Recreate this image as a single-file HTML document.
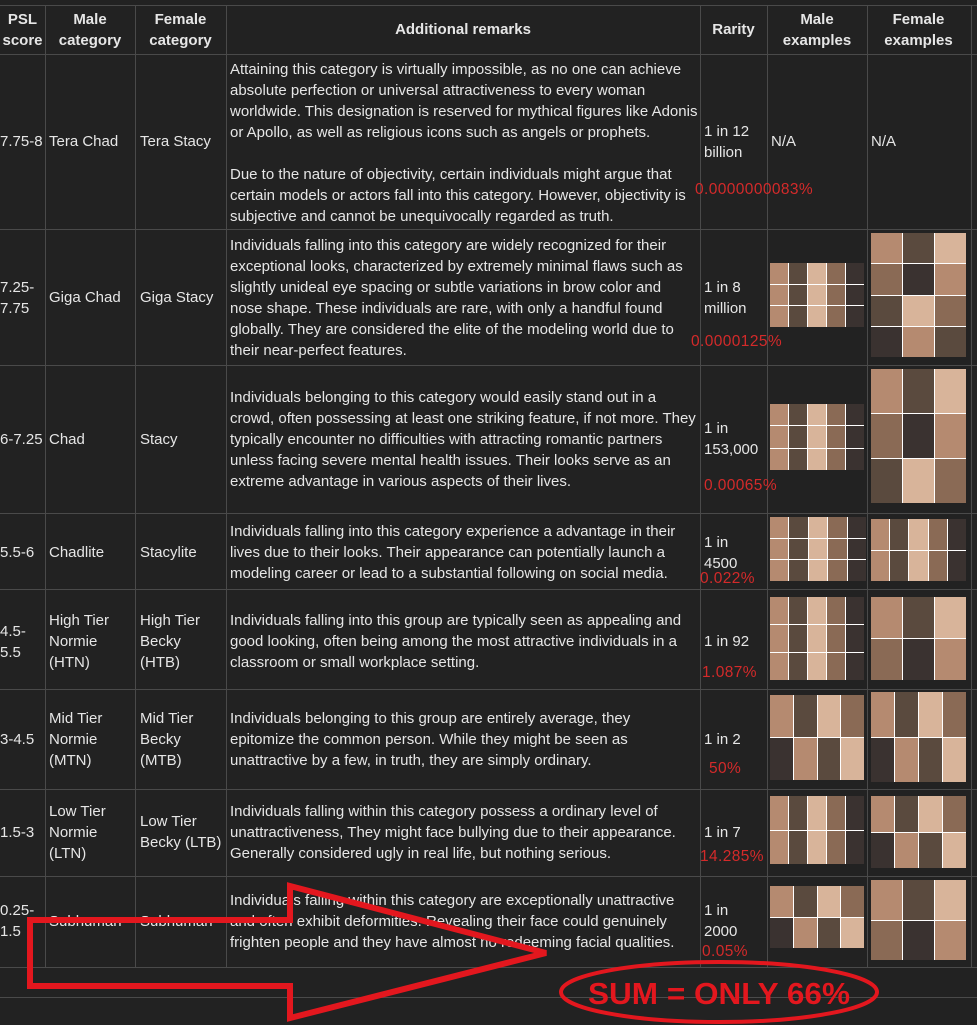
<!DOCTYPE html>
<html><head><meta charset="utf-8"><style>
body{margin:0;width:977px;height:1025px;background:#222;overflow:hidden;position:relative;font-family:"Liberation Sans",Arial,sans-serif;color:#e6e6e6;font-size:15px}
.h{position:absolute;left:0;width:977px;height:1px;background:#4a4a4a}
.v{position:absolute;top:5px;width:1px;height:962px;background:#4a4a4a}
.t{position:absolute;line-height:21px;white-space:nowrap}
.b{font-weight:bold;text-align:center}
.r{color:#d42a2a;font-size:15.5px;letter-spacing:0.4px}
.img{position:absolute;display:grid;background:#fff;gap:1px}
.img div:nth-child(5n+1){background:#b58a70}
.img div:nth-child(5n+2){background:#5a4a3e}
.img div:nth-child(5n+3){background:#d8b49a}
.img div:nth-child(5n+4){background:#8a6a55}
.img div:nth-child(5n){background:#3a3230}
</style></head><body>
<div class="h" style="top:5px"></div>
<div class="h" style="top:54px"></div>
<div class="h" style="top:229px"></div>
<div class="h" style="top:365px"></div>
<div class="h" style="top:513px"></div>
<div class="h" style="top:589px"></div>
<div class="h" style="top:689px"></div>
<div class="h" style="top:789px"></div>
<div class="h" style="top:876px"></div>
<div class="h" style="top:967px"></div>
<div class="h" style="top:997px"></div>
<div class="v" style="left:45px"></div>
<div class="v" style="left:135px"></div>
<div class="v" style="left:226px"></div>
<div class="v" style="left:700px"></div>
<div class="v" style="left:767px"></div>
<div class="v" style="left:867px"></div>
<div class="v" style="left:971px"></div>

<div class="t b" style="left:0;width:45px;top:9px">PSL<br>score</div>
<div class="t b" style="left:45px;width:90px;top:9px">Male<br>category</div>
<div class="t b" style="left:135px;width:91px;top:9px">Female<br>category</div>
<div class="t b" style="left:226px;width:474px;top:19px">Additional remarks</div>
<div class="t b" style="left:700px;width:67px;top:19px">Rarity</div>
<div class="t b" style="left:767px;width:100px;top:9px">Male<br>examples</div>
<div class="t b" style="left:867px;width:103px;top:9px">Female<br>examples</div>

<div class="t" style="left:0;top:131px">7.75-8</div>
<div class="t" style="left:49px;top:131px">Tera Chad</div>
<div class="t" style="left:140px;top:131px">Tera Stacy</div>
<div class="t" style="left:230px;top:59px">Attaining this category is virtually impossible, as no one can achieve<br>absolute perfection or universal attractiveness to every woman<br>worldwide. This designation is reserved for mythical figures like Adonis<br>or Apollo, as well as religious icons such as angels or prophets.<br><br>Due to the nature of objectivity, certain individuals might argue that<br>certain models or actors fall into this category. However, objectivity is<br>subjective and cannot be unequivocally regarded as truth.</div>
<div class="t" style="left:704px;top:121px">1 in 12<br>billion</div>
<div class="t r" style="left:695px;top:179px">0.0000000083%</div>
<div class="t" style="left:771px;top:131px">N/A</div>
<div class="t" style="left:871px;top:131px">N/A</div>

<div class="t" style="left:0;top:277px">7.25-<br>7.75</div>
<div class="t" style="left:49px;top:287px">Giga Chad</div>
<div class="t" style="left:140px;top:287px">Giga Stacy</div>
<div class="t" style="left:230px;top:235px">Individuals falling into this category are widely recognized for their<br>exceptional looks, characterized by extremely minimal flaws such as<br>slightly unideal eye spacing or subtle variations in brow color and<br>nose shape. These individuals are rare, with only a handful found<br>globally. They are considered the elite of the modeling world due to<br>their near-perfect features.</div>
<div class="t" style="left:704px;top:277px">1 in 8<br>million</div>
<div class="t r" style="left:691px;top:331px">0.0000125%</div>
<div class="img" style="left:770px;top:263px;width:94px;height:64px;grid-template-columns:repeat(5,1fr);grid-template-rows:repeat(3,1fr)"><div></div><div></div><div></div><div></div><div></div><div></div><div></div><div></div><div></div><div></div><div></div><div></div><div></div><div></div><div></div></div>
<div class="img" style="left:871px;top:233px;width:95px;height:124px;grid-template-columns:repeat(3,1fr);grid-template-rows:repeat(4,1fr)"><div></div><div></div><div></div><div></div><div></div><div></div><div></div><div></div><div></div><div></div><div></div><div></div></div>

<div class="t" style="left:0;top:429px">6-7.25</div>
<div class="t" style="left:49px;top:429px">Chad</div>
<div class="t" style="left:140px;top:429px">Stacy</div>
<div class="t" style="left:230px;top:387px">Individuals belonging to this category would easily stand out in a<br>crowd, often possessing at least one striking feature, if not more. They<br>typically encounter no difficulties with attracting romantic partners<br>unless facing severe mental health issues. Their looks serve as an<br>extreme advantage in various aspects of their lives.</div>
<div class="t" style="left:704px;top:418px">1 in<br>153,000</div>
<div class="t r" style="left:704px;top:475px">0.00065%</div>
<div class="img" style="left:770px;top:404px;width:94px;height:66px;grid-template-columns:repeat(5,1fr);grid-template-rows:repeat(3,1fr)"><div></div><div></div><div></div><div></div><div></div><div></div><div></div><div></div><div></div><div></div><div></div><div></div><div></div><div></div><div></div></div>
<div class="img" style="left:871px;top:369px;width:95px;height:134px;grid-template-columns:repeat(3,1fr);grid-template-rows:repeat(3,1fr)"><div></div><div></div><div></div><div></div><div></div><div></div><div></div><div></div><div></div></div>

<div class="t" style="left:0;top:542px">5.5-6</div>
<div class="t" style="left:49px;top:542px">Chadlite</div>
<div class="t" style="left:140px;top:542px">Stacylite</div>
<div class="t" style="left:230px;top:521px">Individuals falling into this category experience a advantage in their<br>lives due to their looks. Their appearance can potentially launch a<br>modeling career or lead to a substantial following on social media.</div>
<div class="t" style="left:704px;top:532px">1 in<br>4500</div>
<div class="t r" style="left:700px;top:568px">0.022%</div>
<div class="img" style="left:770px;top:517px;width:96px;height:64px;grid-template-columns:repeat(5,1fr);grid-template-rows:repeat(3,1fr)"><div></div><div></div><div></div><div></div><div></div><div></div><div></div><div></div><div></div><div></div><div></div><div></div><div></div><div></div><div></div></div>
<div class="img" style="left:871px;top:519px;width:95px;height:62px;grid-template-columns:repeat(5,1fr);grid-template-rows:repeat(2,1fr)"><div></div><div></div><div></div><div></div><div></div><div></div><div></div><div></div><div></div><div></div></div>

<div class="t" style="left:0;top:621px">4.5-<br>5.5</div>
<div class="t" style="left:49px;top:610px">High Tier<br>Normie<br>(HTN)</div>
<div class="t" style="left:140px;top:610px">High Tier<br>Becky<br>(HTB)</div>
<div class="t" style="left:230px;top:610px">Individuals falling into this group are typically seen as appealing and<br>good looking, often being among the most attractive individuals in a<br>classroom or small workplace setting.</div>
<div class="t" style="left:704px;top:631px">1 in 92</div>
<div class="t r" style="left:702px;top:662px">1.087%</div>
<div class="img" style="left:770px;top:597px;width:94px;height:83px;grid-template-columns:repeat(5,1fr);grid-template-rows:repeat(3,1fr)"><div></div><div></div><div></div><div></div><div></div><div></div><div></div><div></div><div></div><div></div><div></div><div></div><div></div><div></div><div></div></div>
<div class="img" style="left:871px;top:597px;width:95px;height:83px;grid-template-columns:repeat(3,1fr);grid-template-rows:repeat(2,1fr)"><div></div><div></div><div></div><div></div><div></div><div></div></div>

<div class="t" style="left:0;top:729px">3-4.5</div>
<div class="t" style="left:49px;top:708px">Mid Tier<br>Normie<br>(MTN)</div>
<div class="t" style="left:140px;top:708px">Mid Tier<br>Becky<br>(MTB)</div>
<div class="t" style="left:230px;top:708px">Individuals belonging to this group are entirely average, they<br>epitomize the common person. While they might be seen as<br>unattractive by a few, in truth, they are simply ordinary.</div>
<div class="t" style="left:704px;top:729px">1 in 2</div>
<div class="t r" style="left:709px;top:758px">50%</div>
<div class="img" style="left:770px;top:695px;width:94px;height:85px;grid-template-columns:repeat(4,1fr);grid-template-rows:repeat(2,1fr)"><div></div><div></div><div></div><div></div><div></div><div></div><div></div><div></div></div>
<div class="img" style="left:871px;top:692px;width:95px;height:90px;grid-template-columns:repeat(4,1fr);grid-template-rows:repeat(2,1fr)"><div></div><div></div><div></div><div></div><div></div><div></div><div></div><div></div></div>

<div class="t" style="left:0;top:822px">1.5-3</div>
<div class="t" style="left:49px;top:801px">Low Tier<br>Normie<br>(LTN)</div>
<div class="t" style="left:140px;top:811px">Low Tier<br>Becky (LTB)</div>
<div class="t" style="left:230px;top:801px">Individuals falling within this category possess a ordinary level of<br>unattractiveness, They might face bullying due to their appearance.<br>Generally considered ugly in real life, but nothing serious.</div>
<div class="t" style="left:704px;top:822px">1 in 7</div>
<div class="t r" style="left:700px;top:846px">14.285%</div>
<div class="img" style="left:770px;top:796px;width:94px;height:68px;grid-template-columns:repeat(5,1fr);grid-template-rows:repeat(2,1fr)"><div></div><div></div><div></div><div></div><div></div><div></div><div></div><div></div><div></div><div></div></div>
<div class="img" style="left:871px;top:796px;width:95px;height:72px;grid-template-columns:repeat(4,1fr);grid-template-rows:repeat(2,1fr)"><div></div><div></div><div></div><div></div><div></div><div></div><div></div><div></div></div>

<div class="t" style="left:0;top:900px">0.25-<br>1.5</div>
<div class="t" style="left:49px;top:911px">Subhuman</div>
<div class="t" style="left:140px;top:911px">Subhuman</div>
<div class="t" style="left:230px;top:890px">Individuals falling within this category are exceptionally unattractive<br>and often exhibit deformities. Revealing their face could genuinely<br>frighten people and they have almost no redeeming facial qualities.</div>
<div class="t" style="left:704px;top:900px">1 in<br>2000</div>
<div class="t r" style="left:702px;top:941px">0.05%</div>
<div class="img" style="left:770px;top:886px;width:94px;height:62px;grid-template-columns:repeat(4,1fr);grid-template-rows:repeat(2,1fr)"><div></div><div></div><div></div><div></div><div></div><div></div><div></div><div></div></div>
<div class="img" style="left:871px;top:880px;width:95px;height:80px;grid-template-columns:repeat(3,1fr);grid-template-rows:repeat(2,1fr)"><div></div><div></div><div></div><div></div><div></div><div></div></div>

<svg style="position:absolute;left:0;top:0" width="977" height="1025">
<polygon points="30,920 290,920 290,886 546,953 290,1018 290,986 30,986" fill="none" stroke="#e3171e" stroke-width="6" stroke-linejoin="miter"/>
<ellipse cx="719" cy="992" rx="158" ry="30" fill="none" stroke="#e3171e" stroke-width="4"/>
<text x="719" y="1004" text-anchor="middle" fill="#e3171e" font-family="Liberation Sans Narrow, Liberation Sans, sans-serif" font-weight="bold" font-size="31" textLength="262" lengthAdjust="spacingAndGlyphs">SUM = ONLY 66%</text>
</svg>
</body></html>
